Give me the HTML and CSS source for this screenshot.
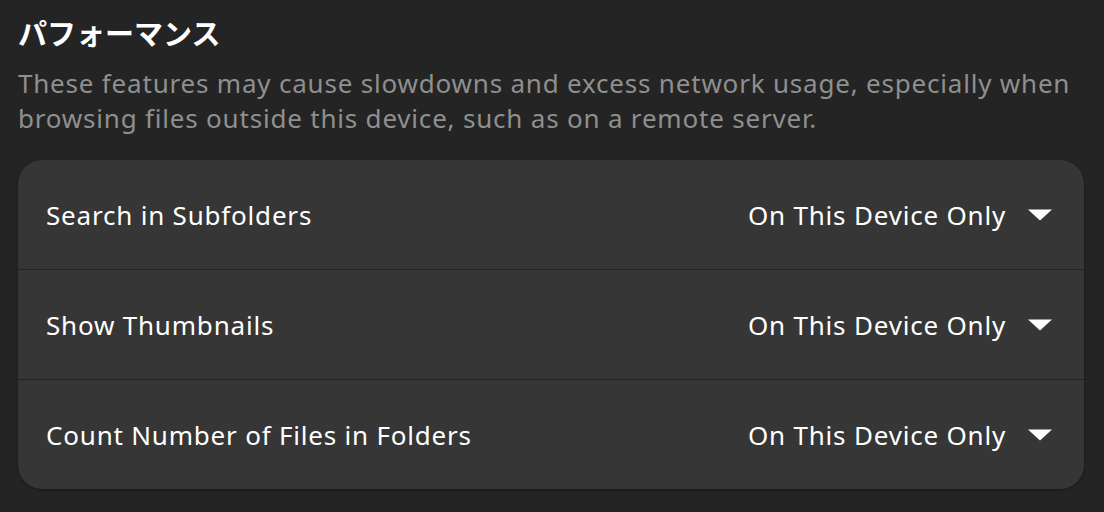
FILE: index.html
```html
<!DOCTYPE html>
<html lang="ja">
<head>
<meta charset="utf-8">
<link rel="stylesheet" href="styles.css">
</head>
<body>
<div class="page">
  <h2 class="title">パフォーマンス</h2>
  <p class="desc">These features may cause slowdowns and excess network usage, especially when browsing files outside this device, such as on a remote server.</p>
  <div class="card">
    <div class="row">
      <span class="label">Search in Subfolders</span>
      <span class="value">On This Device Only<svg class="arrow" width="24" height="12" viewBox="0 0 24 12"><path d="M0 0.5 H24 L12 11.5 Z" fill="#fff"/></svg></span>
    </div>
    <div class="row">
      <span class="label">Show Thumbnails</span>
      <span class="value">On This Device Only<svg class="arrow" width="24" height="12" viewBox="0 0 24 12"><path d="M0 0.5 H24 L12 11.5 Z" fill="#fff"/></svg></span>
    </div>
    <div class="row">
      <span class="label">Count Number of Files in Folders</span>
      <span class="value">On This Device Only<svg class="arrow" width="24" height="12" viewBox="0 0 24 12"><path d="M0 0.5 H24 L12 11.5 Z" fill="#fff"/></svg></span>
    </div>
  </div>
</div>
</body>
</html>
```
FILE: styles.css
```css
html, body {
  margin: 0;
  padding: 0;
  background: #242424;
}
body {
  width: 1104px;
  height: 512px;
  overflow: hidden;
  font-family: "Noto Sans", "Noto Sans CJK JP", sans-serif;
  color: #ffffff;
}
.page {
  padding: 14px 20px 0 18px;
}
.title {
  margin: 0;
  font-family: "Noto Sans CJK JP", sans-serif;
  font-size: 29px;
  font-weight: 700;
  line-height: 36px;
}
.desc {
  margin: 16px 0 0 0;
  font-size: 26px;
  letter-spacing: 0.8px;
  line-height: 35px;
  color: #8f8f8f;
}
.card {
  margin-top: 24px;
  background: #363636;
  border-radius: 24px;
  box-shadow: 0 1px 3px rgba(0,0,0,0.35);
  overflow: hidden;
}
.row {
  height: 109px;
  display: flex;
  align-items: center;
  justify-content: space-between;
  padding: 0 32px 0 28px;
  font-size: 26px;
  letter-spacing: 0.8px;
  border-bottom: 1px solid #232323;
}
.row:last-child {
  border-bottom: none;
}
.value {
  display: flex;
  align-items: center;
  gap: 22px;
}
.arrow {
  display: block;
}
```
